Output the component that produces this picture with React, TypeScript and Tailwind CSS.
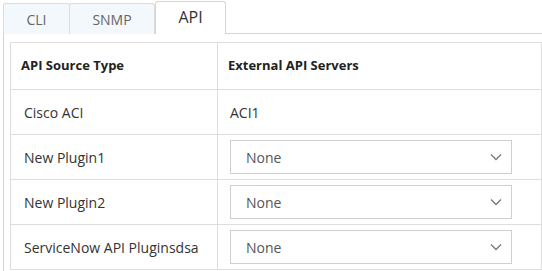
import React from "react";

const Chevron = () => (
  <svg width="12" height="8" viewBox="0 0 12 8" fill="none" className="text-[#777]">
    <path d="M1 1.5 L6 6.5 L11 1.5" stroke="currentColor" strokeWidth="1.3" />
  </svg>
);

const Select = () => (
  <div className="flex items-center justify-between w-[282px] h-[34px] border border-[#cfcfcf] bg-white pl-[15px] pr-[9px] text-[14px] text-[#555]">
    <span>None</span>
    <Chevron />
  </div>
);

const rows: { name: string; value?: string }[] = [
  { name: "Cisco ACI", value: "ACI1" },
  { name: "New Plugin1" },
  { name: "New Plugin2" },
  { name: "ServiceNow API Pluginsdsa" },
];

export default function App() {
  return (
    <div
      className="w-[542px] h-[271px] overflow-hidden bg-white"
      style={{ fontFamily: '"Open Sans", sans-serif' }}
    >
      <div className="w-[560px]">
        <div className="flex items-end h-[34px] pl-[3px]">
          <div className="w-[67px] h-[31px] border border-b-0 border-[#dcdcdc] rounded-t-[3px] bg-[#f3f8fc] flex items-center justify-center text-[14px] text-[#666]">
            CLI
          </div>
          <div className="w-[86px] h-[31px] -ml-px border border-b-0 border-[#dcdcdc] rounded-t-[3px] bg-[#f3f8fc] flex items-center justify-center text-[14px] text-[#666]">
            SNMP
          </div>
          <div className="w-[71px] h-[33px] border border-b-0 border-[#d6d6d6] rounded-t-[3px] bg-white flex items-center justify-center text-[16px] text-[#333] pb-[2px]">
            API
          </div>
          <div className="flex-1 h-full border-b border-[#d4d4d4]" />
        </div>
        <div className="ml-[3px] border-l border-[#d4d4d4] pl-[6px] pt-[8px] pb-4">
          <div className="w-[532px] border border-[#dedede]">
            <div className="flex h-[46px] items-center text-[13px] font-bold text-[#222]">
              <div className="w-[206px] pl-[10px]">API Source Type</div>
              <div className="flex-1 h-full flex items-center border-l border-[#dedede] pl-[10px]">
                External API Servers
              </div>
            </div>
            {rows.map((r) => (
              <div key={r.name} className="flex h-[45px] border-t border-[#dedede] text-[14px] text-[#333]">
                <div className="w-[206px] pl-[13px] flex items-center">{r.name}</div>
                <div className="flex-1 flex items-center border-l border-[#dedede] pl-[12px]">
                  {r.value ? <span>{r.value}</span> : <Select />}
                </div>
              </div>
            ))}
          </div>
        </div>
      </div>
    </div>
  );
}
